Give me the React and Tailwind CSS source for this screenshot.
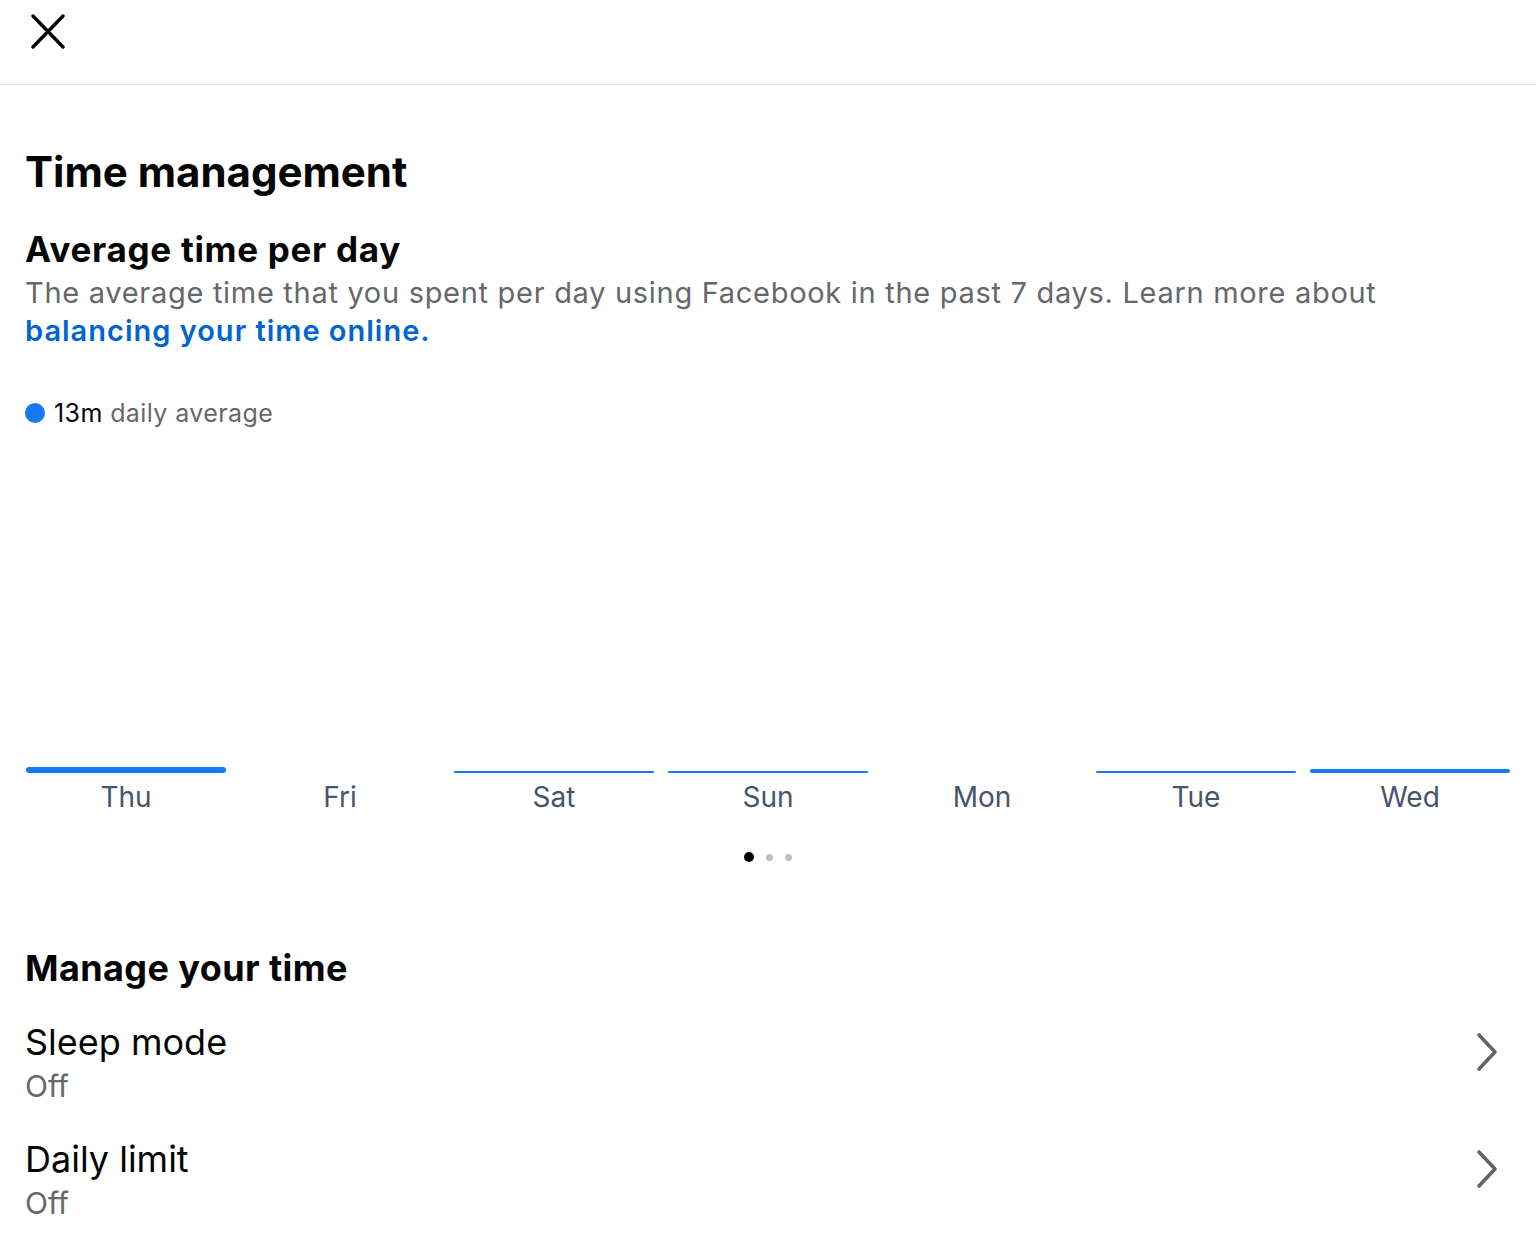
const days = [
  { label: "Thu", bar: "h-[6px]" },
  { label: "Fri", bar: "h-0" },
  { label: "Sat", bar: "h-[2px]" },
  { label: "Sun", bar: "h-[2px]" },
  { label: "Mon", bar: "h-0" },
  { label: "Tue", bar: "h-[2px]" },
  { label: "Wed", bar: "h-[4px]" },
];

function Chevron() {
  return (
    <svg width="24" height="40" viewBox="0 0 24 40" className="text-[#5f646b] mb-[20px]">
      <path d="M4 3 L20 20 L4 37" stroke="currentColor" strokeWidth="3.6" strokeLinecap="round" strokeLinejoin="round" fill="none" />
    </svg>
  );
}

function SettingRow({ title, value }) {
  return (
    <div className="flex items-center justify-between pr-[12px]">
      <div>
        <div className="text-[36px] leading-[48px] text-[#050505]">{title}</div>
        <div className="text-[30px] leading-[40px] text-[#65676b]">{value}</div>
      </div>
      <Chevron />
    </div>
  );
}

export default function App() {
  return (
    <div className="min-h-[1250px] bg-white text-[#050505] font-['Inter',sans-serif]">
      <header className="h-[85px] border-b border-[#e4e6eb] flex items-start pt-[14px] pl-[28px]">
        <svg width="40" height="36" viewBox="0 0 40 36" className="text-black">
          <path d="M5 2 L35 33 M35 2 L5 33" stroke="currentColor" strokeWidth="3.4" strokeLinecap="round" fill="none" />
        </svg>
      </header>

      <main className="px-[25px]">
        <h1 className="mt-[62px] text-[42px] leading-[50px] font-bold">Time management</h1>

        <h2 className="mt-[31px] text-[35px] leading-[42px] font-bold tracking-[0.7px]">Average time per day</h2>
        <p className="mt-[4px] text-[29px] leading-[38px] tracking-[0.7px] text-[#65676b] pr-[20px]">
          The average time that you spent per day using Facebook in the past 7 days. Learn more about{" "}
          <span className="text-[#0064d1] font-semibold tracking-[1px]">balancing your time online.</span>
        </p>

        <div className="mt-[47px] flex items-center gap-[9px]">
          <span className="w-[20px] h-[20px] rounded-full bg-[#1877f2]" />
          <span className="text-[25px] leading-[32px] tracking-[0.4px]">
            13m <span className="text-[#65676b]">daily average</span>
          </span>
        </div>

        <div className="mt-[336px] ml-[1px] grid grid-cols-7 gap-[14px] w-[1484px]">
          {days.map((d) => (
            <div key={d.label} className="flex flex-col items-stretch">
              <div className="h-[8px] flex items-end">
                <div className={`w-full rounded-full bg-[#1877f2] ${d.bar}`} />
              </div>
              <div className="mt-[4px] text-center text-[28px] leading-[40px] text-[#45556a]">{d.label}</div>
            </div>
          ))}
        </div>

        <div className="mt-[35px] flex items-center justify-center gap-[12px]">
          <span className="w-[10px] h-[10px] rounded-full bg-black" />
          <span className="w-[7px] h-[7px] rounded-full bg-[#bcc0c4]" />
          <span className="w-[7px] h-[7px] rounded-full bg-[#bcc0c4]" />
        </div>

        <h2 className="mt-[84px] text-[36px] leading-[44px] font-bold tracking-[0.4px]">Manage your time</h2>

        <div className="mt-[28px] flex flex-col gap-[29px]">
          <SettingRow title="Sleep mode" value="Off" />
          <SettingRow title="Daily limit" value="Off" />
        </div>
      </main>
    </div>
  );
}
